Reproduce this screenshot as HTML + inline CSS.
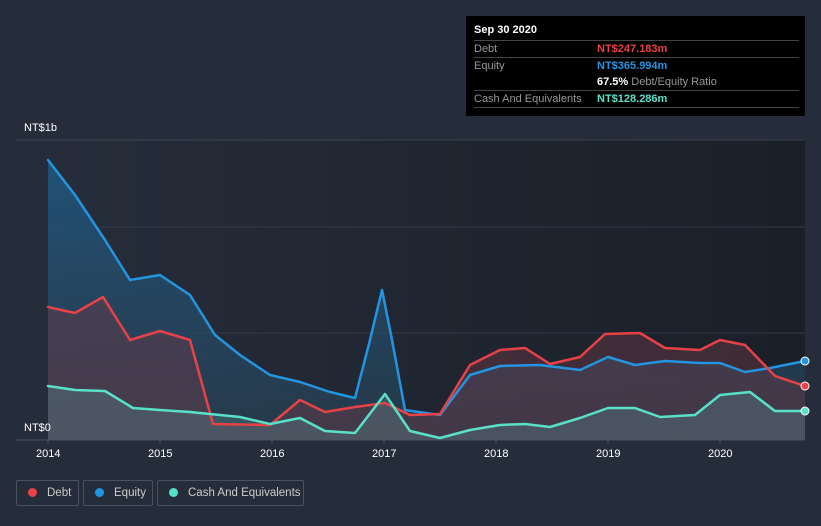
<!DOCTYPE html>
<html><head><style>
html,body{margin:0;width:821px;height:526px;overflow:hidden}
body{background:#262d3a;font-family:"Liberation Sans",sans-serif;position:relative}
.tt{position:absolute;left:466px;top:16px;width:339px;height:100px;background:#000;color:#fff;font-size:11px}
.tt .r{position:absolute;left:8px;width:325px;border-top:1px solid #444}
.lab{color:#999;position:absolute;left:0}
.val{position:absolute;left:123px;font-weight:bold}
.leg{position:absolute;top:480px;height:26px;border:1px solid #4a5160;border-radius:2px;color:#ccc;font-size:11.5px;line-height:24px;box-sizing:border-box;white-space:nowrap}
.leg i{display:inline-block;width:9px;height:9px;border-radius:50%;margin:0 10px 0 11px;vertical-align:-1px}
.ax{position:absolute;color:#fff;font-size:11px}
</style></head><body>
<svg width="821" height="526" style="position:absolute;left:0;top:0">
<defs>
<linearGradient id="bg" x1="0" x2="1"><stop offset="0" stop-color="#262d3a"/><stop offset="1" stop-color="#1a1f28"/></linearGradient>
<linearGradient id="eg" x1="0" y1="0" x2="0" y2="1"><stop offset="0" stop-color="#1f5a86" stop-opacity=".8"/><stop offset="1" stop-color="#2a4a60" stop-opacity=".5"/></linearGradient>
</defs>
<rect x="48" y="140" width="757" height="300" fill="url(#bg)"/>
<line x1="16" y1="140" x2="805" y2="140" stroke="#3a4150"/>
<line x1="48" y1="227" x2="805" y2="227" stroke="#333a47"/>
<line x1="48" y1="333" x2="805" y2="333" stroke="#333a47"/>
<polygon fill="url(#eg)" points="48,440 48,160 75,195 105,240 130,280 160,275 190,295 215,335 240,355 270,375 300,382 330,392 355,398 370,340 382,290 392,340 405,410 440,415 470,375 500,366 540,365 580,370 608,357 635,365 665,361 700,363 720,363 745,372 770,368 805,361 805,440"/>
<polygon fill="#6a3a48" fill-opacity=".45" points="48,440 48,307 75,313 103,297 130,340 160,331 190,340 213,424 270,425 300,400 325,412 355,407 385,403 410,415 440,414 470,365 500,350 525,348 550,364 580,357 605,334 640,333 665,348 700,350 720,340 745,345 775,376 805,386 805,440"/>
<polygon fill="#5a8a90" fill-opacity=".35" points="48,440 48,386 75,390 105,391 133,408 160,410 190,412 240,417 270,424 300,418 325,431 355,433 385,394 410,431 440,438 470,430 500,425 525,424 550,427 580,418 608,408 635,408 660,417 695,415 720,395 750,392 775,411 805,411 805,440"/>
<g fill="none" stroke-width="2.5" stroke-linejoin="round" stroke-linecap="round">
<polyline stroke="#2394df" points="48,160 75,195 105,240 130,280 160,275 190,295 215,335 240,355 270,375 300,382 330,392 355,398 370,340 382,290 392,340 405,410 440,415 470,375 500,366 540,365 580,370 608,357 635,365 665,361 700,363 720,363 745,372 770,368 805,361"/>
<polyline stroke="#e84146" points="48,307 75,313 103,297 130,340 160,331 190,340 213,424 270,425 300,400 325,412 355,407 385,403 410,415 440,414 470,365 500,350 525,348 550,364 580,357 605,334 640,333 665,348 700,350 720,340 745,345 775,376 805,386"/>
<polyline stroke="#58e1c8" points="48,386 75,390 105,391 133,408 160,410 190,412 240,417 270,424 300,418 325,431 355,433 385,394 410,431 440,438 470,430 500,425 525,424 550,427 580,418 608,408 635,408 660,417 695,415 720,395 750,392 775,411 805,411"/>
</g>
<circle cx="805" cy="361" r="4" fill="#2394df" stroke="#fff" stroke-width="1"/>
<circle cx="805" cy="386" r="4" fill="#e84146" stroke="#fff" stroke-width="1"/>
<circle cx="805" cy="411" r="4" fill="#58e1c8" stroke="#fff" stroke-width="1"/>
<line x1="16" y1="440" x2="805" y2="440" stroke="#4a5160"/>
<g stroke="#4a5160"><line x1="48" y1="440" x2="48" y2="444"/><line x1="160" y1="440" x2="160" y2="444"/><line x1="272" y1="440" x2="272" y2="444"/><line x1="384" y1="440" x2="384" y2="444"/><line x1="496" y1="440" x2="496" y2="444"/><line x1="608" y1="440" x2="608" y2="444"/><line x1="720" y1="440" x2="720" y2="444"/></g>
</svg>
<div class="ax" style="left:24px;top:122px">NT$1b</div>
<div class="ax" style="left:24px;top:422px">NT$0</div>
<div class="ax" style="left:36px;top:448px">2014</div>
<div class="ax" style="left:148px;top:448px">2015</div>
<div class="ax" style="left:260px;top:448px">2016</div>
<div class="ax" style="left:372px;top:448px">2017</div>
<div class="ax" style="left:484px;top:448px">2018</div>
<div class="ax" style="left:596px;top:448px">2019</div>
<div class="ax" style="left:708px;top:448px">2020</div>
<div class="tt">
<div style="position:absolute;left:8px;top:8px;font-weight:bold">Sep 30 2020</div>
<div class="r" style="top:24px;height:16px;line-height:16px"><span class="lab">Debt</span><span class="val" style="color:#e84146">NT$247.183m</span></div>
<div class="r" style="top:41px;height:16px;line-height:16px"><span class="lab">Equity</span><span class="val" style="color:#2394df">NT$365.994m</span></div>
<div style="position:absolute;left:131px;top:58px;line-height:16px"><b>67.5%</b> <span style="color:#999">Debt/Equity Ratio</span></div>
<div class="r" style="top:74px;height:16px;line-height:16px"><span class="lab">Cash And Equivalents</span><span class="val" style="color:#58e1c8">NT$128.286m</span></div>
<div class="r" style="top:91px;height:0"></div>
</div>
<div class="leg" style="left:16px;width:63px"><i style="background:#e84146"></i>Debt</div>
<div class="leg" style="left:83px;width:70px"><i style="background:#2394df"></i>Equity</div>
<div class="leg" style="left:157px;width:147px"><i style="background:#58e1c8"></i>Cash And Equivalents</div>
</body></html>
